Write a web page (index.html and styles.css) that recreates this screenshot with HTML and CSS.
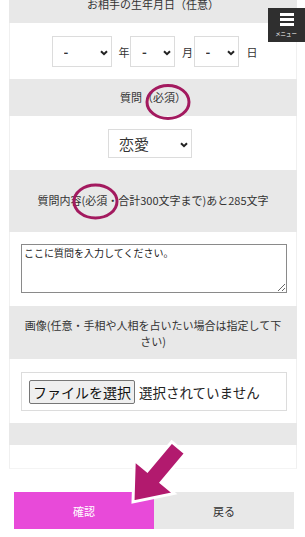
FILE: index.html
```html
<!DOCTYPE html>
<html lang="ja">
<head>
<meta charset="utf-8">
<title>質問フォーム</title>
<link rel="stylesheet" href="styles.css">
</head>
<body>
<div class="page">
  <form class="form">
    <div class="head">お相手の生年月日（任意）</div>
    <div class="cell">
      <div class="date">
        <span class="sel w60"><select><option>-</option></select><svg class="chev" viewBox="0 0 8 6"><path d="M1 1.2l3 3 3-3"/></svg></span>
        <span class="unit">年</span>
        <span class="sel w45"><select><option>-</option></select><svg class="chev" viewBox="0 0 8 6"><path d="M1 1.2l3 3 3-3"/></svg></span>
        <span class="unit">月</span>
        <span class="sel w45"><select><option>-</option></select><svg class="chev" viewBox="0 0 8 6"><path d="M1 1.2l3 3 3-3"/></svg></span>
        <span class="unit last">日</span>
      </div>
    </div>

    <div class="head">質問（必須）</div>
    <div class="cell center">
      <span class="sel w84"><select class="big"><option>恋愛</option></select><svg class="chev" viewBox="0 0 8 6"><path d="M1 1.2l3 3 3-3"/></svg></span>
    </div>

    <div class="head tall">質問内容(必須・合計300文字まで)あと285文字</div>
    <div class="cell text-cell">
      <textarea class="area">ここに質問を入力してください。</textarea>
    </div>

    <div class="head narrow">画像(任意・手相や人相を占いたい場合は指定して下さい)</div>
    <div class="cell">
      <div class="file">
        <button type="button" class="file-btn">ファイルを選択</button>
        <span class="file-name">選択されていません</span>
      </div>
    </div>

    <div class="head empty"></div>
    <div class="cell empty-cell"></div>
  </form>

  <div class="actions">
    <button type="button" class="btn ok">確認</button>
    <button type="button" class="btn back">戻る</button>
  </div>

  <svg class="overlay" viewBox="0 0 305 537" width="305" height="537">
    <ellipse cx="168" cy="102" rx="21" ry="16.5" class="ring"/>
    <ellipse cx="95.5" cy="201.5" rx="21.5" ry="16.5" class="ring"/>
    <polygon class="arrow" transform="translate(133 502) rotate(40)" points="0,0 -26,-33 -9,-33 -9,-71 9,-71 9,-33 26,-33"/>
  </svg>

  <div class="menu">
    <span class="bar"></span><span class="bar"></span><span class="bar"></span>
    <span class="menu-label">メニュー</span>
  </div>
</div>
</body>
</html>
```

FILE: styles.css
```css
* { box-sizing: border-box; }
html, body { margin: 0; padding: 0; background: #fff; }
body {
  font-family: "Noto Sans CJK JP", "Noto Sans", sans-serif;
  color: #333;
  font-size: 11px;
  overflow: hidden;
  width: 305px;
  height: 537px;
}
.page { position: relative; width: 305px; height: 537px; overflow: hidden; }
.form {
  margin: -14px 8px 0 9px;
  width: 288px;
}
.head {
  background: #e8e8e8;
  text-align: center;
  line-height: 16px;
  padding: 10px 10px 11px;
  font-size: 11px;
  color: #333;
}
.head.tall { padding: 22px 10px 24px; }
.head.narrow { padding: 11px 13px 10px; }
.head.empty { height: 22px; padding: 0; }
.cell {
  background: #fff;
  border-left: 1px solid #f0f0f0;
  border-right: 1px solid #f0f0f0;
  padding: 13px 10px 12px 11px;
}
.cell.center { display: flex; justify-content: center; padding-right: 17px; padding-left: 11px; }
.cell.text-cell { padding: 12px 9px 13px 11px; }
.cell.empty-cell { height: 24px; padding: 0; border-bottom: 1px solid #f4f4f4; }

.date { display: flex; align-items: center; justify-content: center; padding-left: 2px; }
.unit { font-size: 11px; margin: 0 0.5px 0 7px; color: #333; }
.unit.last { margin-right: 0; margin-left: 8px; }

.sel { position: relative; display: inline-block; }
.sel select {
  appearance: none;
  -webkit-appearance: none;
  width: 100%;
  height: 31px;
  border: 1px solid #dcdcdc;
  border-radius: 0;
  background: #fff;
  font-family: "Noto Sans CJK JP", sans-serif;
  font-size: 13px;
  font-weight: bold;
  color: #333;
  padding: 0 0 0 11px;
  margin: 0;
}
.sel select.big { height: 29px; font-size: 15px; font-weight: normal; padding-left: 10px; }
.w60 { width: 60px; }
.w45 { width: 45px; }
.w84 { width: 84px; }
.chev {
  position: absolute;
  right: 4px;
  top: 50%;
  width: 8px;
  height: 6px;
  margin-top: -2px;
  fill: none;
  stroke: #222;
  stroke-width: 2;
}

.area {
  display: block;
  width: 266px;
  height: 49px;
  margin: 0;
  border: 1px solid #8a8a8a;
  border-radius: 0;
  padding: 1px 2px;
  font-family: "Noto Sans CJK JP", sans-serif;
  font-size: 10px;
  line-height: 13px;
  color: #222;
  resize: vertical;
}

.file {
  width: 266px;
  height: 39px;
  border: 1px solid #dcdcdc;
  display: flex;
  align-items: center;
  padding-left: 7px;
  gap: 4px;
}
.file-btn {
  height: 24px;
  padding: 0 3px;
  background: #efefef;
  border: 1px solid #767676;
  border-radius: 2px;
  font-family: "Noto Sans CJK JP", sans-serif;
  font-size: 14px;
  line-height: 20px;
  color: #111;
}
.file-name { font-size: 13.5px; color: #222; }

.actions {
  display: flex;
  margin: 23px 0 0 14px;
  width: 280px;
}
.btn {
  flex: 1;
  height: 37px;
  border: 0;
  font-family: "Noto Sans CJK JP", sans-serif;
  font-size: 11px;
  padding: 0;
}
.btn.ok { background: #e84ad9; color: #fff; }
.btn.back { background: #e8e8e8; color: #333; }

.overlay {
  position: absolute;
  top: 0;
  left: 0;
  pointer-events: none;
}
.ring { fill: none; stroke: #a31a5f; stroke-width: 3; }
.arrow { fill: #b21a6e; stroke: #fff; stroke-width: 3; stroke-linejoin: miter; }

.menu {
  position: absolute;
  top: 8px;
  right: 0;
  width: 37px;
  height: 34px;
  background: #2f2f2f;
  display: flex;
  flex-direction: column;
  align-items: center;
  padding-top: 5px;
}
.bar { display: block; width: 14px; height: 3px; background: #fff; margin-bottom: 2px; }
.menu-label {
  font-size: 6px;
  line-height: 8px;
  color: #fff;
  margin-top: 2px;
  white-space: nowrap;
  transform: scale(0.9);
}
```
